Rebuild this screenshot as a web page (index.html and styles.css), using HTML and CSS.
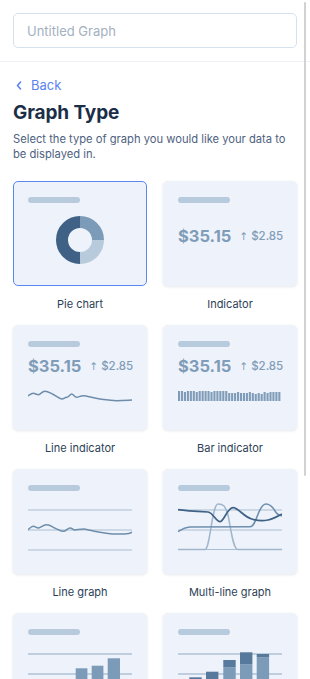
FILE: index.html
```html
<!DOCTYPE html>
<html lang="en">
<head>
<meta charset="utf-8">
<title>Graph Type</title>
<link rel="stylesheet" href="styles.css">
</head>
<body>
<div class="panel">
  <header class="header">
    <input class="title-input" type="text" placeholder="Untitled Graph">
  </header>
  <main class="content">
    <a class="back" href="#">
      <svg class="back-icon" width="6" height="9" viewBox="0 0 6 9"><path d="M4.5 1 L1.5 4.5 L4.5 8" fill="none" stroke="#5a84ef" stroke-width="1.6" stroke-linecap="round" stroke-linejoin="round"/></svg>
      <span>Back</span>
    </a>
    <h1 class="heading">Graph Type</h1>
    <p class="desc">Select the type of graph you would like your data to be displayed in.</p>

    <div class="grid">
      <div class="item">
        <div class="card selected">
          <div class="ph"></div>
          <svg class="chart" viewBox="0 0 104 65" width="104" height="65">
            <path d="M52 11 A18 18 0 0 0 52 47" fill="none" stroke="#3e6185" stroke-width="12"/>
            <path d="M52 11 A18 18 0 0 1 70 29" fill="none" stroke="#7b9bb8" stroke-width="12"/>
            <path d="M70 29 A18 18 0 0 1 52 47" fill="none" stroke="#b8cbdc" stroke-width="12"/>
          </svg>
        </div>
        <div class="label">Pie chart</div>
      </div>

      <div class="item">
        <div class="card">
          <div class="ph"></div>
          <div class="value value-center"><span class="big">$35.15</span><span class="delta"><span class="arrow">↑</span>$2.85</span></div>
        </div>
        <div class="label">Indicator</div>
      </div>

      <div class="item">
        <div class="card">
          <div class="ph"></div>
          <div class="value"><span class="big">$35.15</span><span class="delta"><span class="arrow">↑</span>$2.85</span></div>
          <svg class="mini" viewBox="0 0 104 20" width="104" height="20">
            <path d="M0 9.7 C2 8.5 3.5 7.3 5.3 7.3 S8.5 8.7 10.3 8.7 S14 5.3 17 5.3 S22 7 25.3 8.5 S31 13 33.7 13 S36.5 11.3 38.7 11.3 S42 8 43.7 8 S46.5 11.3 48.7 11.3 S52 9.7 55.3 9.7 S65 12 72 13 S82 14.7 88.7 14.7 S100 14.2 104 14" fill="none" stroke="#6d8dab" stroke-width="1.5" stroke-linecap="round"/>
          </svg>
        </div>
        <div class="label">Line indicator</div>
      </div>

      <div class="item">
        <div class="card">
          <div class="ph"></div>
          <div class="value"><span class="big">$35.15</span><span class="delta"><span class="arrow">↑</span>$2.85</span></div>
          <svg class="mini" viewBox="0 0 104 20" width="104" height="20" fill="#7f9cb8">
            <rect x="0" y="5" width="2.1" height="10"/><rect x="2.95" y="5" width="2.1" height="10"/><rect x="5.9" y="6" width="2.1" height="9"/><rect x="8.85" y="5" width="2.1" height="10"/><rect x="11.8" y="5" width="2.1" height="10"/><rect x="14.75" y="5" width="2.1" height="10"/><rect x="17.7" y="6" width="2.1" height="9"/><rect x="20.65" y="5" width="2.1" height="10"/><rect x="23.6" y="5" width="2.1" height="10"/><rect x="26.55" y="5" width="2.1" height="10"/><rect x="29.5" y="5" width="2.1" height="10"/><rect x="32.45" y="6" width="2.1" height="9"/><rect x="35.4" y="5" width="2.1" height="10"/><rect x="38.35" y="5" width="2.1" height="10"/><rect x="41.3" y="5" width="2.1" height="10"/><rect x="44.25" y="5" width="2.1" height="10"/><rect x="47.2" y="5" width="2.1" height="10"/><rect x="50.15" y="7" width="2.1" height="8"/><rect x="53.1" y="7" width="2.1" height="8"/><rect x="56.05" y="7" width="2.1" height="8"/><rect x="59" y="6" width="2.1" height="9"/><rect x="61.95" y="7" width="2.1" height="8"/><rect x="64.9" y="7" width="2.1" height="8"/><rect x="67.85" y="7" width="2.1" height="8"/><rect x="70.8" y="6" width="2.1" height="9"/><rect x="73.75" y="7" width="2.1" height="8"/><rect x="76.7" y="8" width="2.1" height="7"/><rect x="79.65" y="7" width="2.1" height="8"/><rect x="82.6" y="8" width="2.1" height="7"/><rect x="85.55" y="6" width="2.1" height="9"/><rect x="88.5" y="7" width="2.1" height="8"/><rect x="91.45" y="6" width="2.1" height="9"/><rect x="94.4" y="6" width="2.1" height="9"/><rect x="97.35" y="6" width="2.1" height="9"/><rect x="100.3" y="6" width="2.1" height="9"/>
          </svg>
        </div>
        <div class="label">Bar indicator</div>
      </div>

      <div class="item">
        <div class="card">
          <div class="ph"></div>
          <svg class="chart" viewBox="0 0 104 65" width="104" height="65">
            <g stroke="#a9bdd0" stroke-width="1.2">
              <line x1="0" y1="11" x2="104" y2="11"/>
              <line x1="0" y1="31" x2="104" y2="31"/>
              <line x1="0" y1="51" x2="104" y2="51"/>
            </g>
            <path d="M0 30.7 C2 29 3.5 27.3 5.3 27.3 S8.5 29 10.3 29 S15 25.7 18.7 25.7 S23.5 27.5 27 29.2 S32.5 32.3 35.3 32.3 S39.5 29 42 29 S45 31 47 31 S52 30 55.3 30 S65 32.5 72 33.3 S80 35 85.3 35 S96 34.9 98.7 34.7 S102.5 33.8 104 33.3" fill="none" stroke="#6d8dab" stroke-width="1.5" stroke-linecap="round"/>
          </svg>
        </div>
        <div class="label">Line graph</div>
      </div>

      <div class="item">
        <div class="card">
          <div class="ph"></div>
          <svg class="chart" viewBox="0 0 104 65" width="104" height="65">
            <g stroke="#a9bdd0" stroke-width="1.2">
              <line x1="0" y1="11" x2="104" y2="11"/>
              <line x1="0" y1="31" x2="104" y2="31"/>
              <line x1="0" y1="50.5" x2="104" y2="50.5"/>
            </g>
            <path d="M0 50.5 L27 50.5 C32 50.5 34 5 40 5 C45 5 47 6 50 16 C53 30 55 50.5 60 50.5 L104 50.5" fill="none" stroke="#9fb6cc" stroke-width="1.5"/>
            <path d="M0 32.7 C4 30 7 28.3 12 28 L72 27.7 C76 27.7 78 20 80.5 14 C83 8 85 5 88 5 C92 5 95 8 98 13.5 C100 16 102 16.7 104 16.7" fill="none" stroke="#6f8fae" stroke-width="1.6"/>
            <path d="M0 10.7 C5 11.5 20 12.5 30 13 C35 13.5 38 22.7 42 22.7 C46 22.7 49 9 55 8.7 C60 8.5 66 18 73.7 20 C80 22 85 22 90 21 C96 20 100 17 104 15" fill="none" stroke="#3e6185" stroke-width="1.7"/>
          </svg>
        </div>
        <div class="label">Multi-line graph</div>
      </div>

      <div class="item">
        <div class="card">
          <div class="ph"></div>
          <svg class="chart" viewBox="0 0 104 65" width="104" height="65">
            <g stroke="#8faac3" stroke-width="1.2">
              <line x1="0" y1="11" x2="104" y2="11"/>
              <line x1="0" y1="31" x2="104" y2="31"/>
            </g>
            <g fill="#7b9bb8">
              <rect x="31.5" y="40" width="11.7" height="25"/>
              <rect x="47.7" y="25.3" width="11.7" height="40"/>
              <rect x="63.7" y="22.7" width="11.7" height="43"/>
              <rect x="79.7" y="15.3" width="12.3" height="50"/>
            </g>
          </svg>
        </div>
      </div>

      <div class="item">
        <div class="card">
          <div class="ph"></div>
          <svg class="chart" viewBox="0 0 104 65" width="104" height="65">
            <g stroke="#8faac3" stroke-width="1.2">
              <line x1="0" y1="11" x2="104" y2="11"/>
              <line x1="0" y1="31" x2="104" y2="31"/>
            </g>
            <g fill="#7b9bb8">
              <rect x="11.3" y="40" width="12.4" height="25"/>
              <rect x="28" y="36" width="12.4" height="29"/>
              <rect x="45.3" y="24.3" width="12.4" height="41"/>
              <rect x="62" y="21.3" width="12.4" height="44"/>
              <rect x="78.7" y="14.3" width="12.4" height="51"/>
            </g>
            <g fill="#56799c">
              <rect x="11.3" y="34.3" width="12.4" height="5.7"/>
              <rect x="28" y="28.7" width="12.4" height="7.3"/>
              <rect x="45.3" y="17" width="12.4" height="7.3"/>
              <rect x="62" y="9.3" width="12.4" height="12"/>
              <rect x="78.7" y="11" width="12.4" height="3.3"/>
            </g>
          </svg>
        </div>
      </div>
    </div>
  </main>
  <div class="scroll-thumb"></div>
</div>
</body>
</html>
```

FILE: styles.css
```css
* { box-sizing: border-box; }

html, body {
  margin: 0;
  padding: 0;
  background: #ffffff;
}

body {
  font-family: Inter, "Noto Sans", "Liberation Sans", sans-serif;
  color: #1c2d47;
}

.panel {
  position: relative;
  width: 310px;
  height: 679px;
  overflow: hidden;
}

.header {
  padding: 13px;
  border-bottom: 1px solid #edf1f6;
}

.title-input {
  display: block;
  width: 100%;
  height: 35px;
  border: 1.5px solid #d6e1ee;
  border-radius: 5px;
  padding: 0 13px;
  font-family: inherit;
  font-size: 13px;
  color: #1c2d47;
  background: #fff;
  outline: none;
}

.title-input::placeholder {
  color: #a4b0c1;
}

.content {
  padding: 14px 13px 13px;
}

.back {
  display: flex;
  align-items: center;
  gap: 9px;
  height: 18px;
  padding-left: 3px;
  font-size: 13px;
  color: #5a84ef;
  text-decoration: none;
}

.back-icon { display: block; }

.heading {
  margin: 7px 0 0;
  font-size: 19px;
  line-height: 24px;
  font-weight: 700;
  color: #1c2d47;
  letter-spacing: -0.1px;
}

.desc {
  margin: 6.5px 0 0;
  max-width: 278px;
  font-size: 11.2px;
  line-height: 15px;
  color: #4e6180;
}

.grid {
  margin-top: 19.5px;
  display: grid;
  grid-template-columns: repeat(2, minmax(0, 1fr));
  column-gap: 16px;
  row-gap: 13px;
}

.item {
  min-width: 0;
}

.card {
  height: 105px;
  padding: 15px 14px 0;
  border: 1px solid transparent;
  border-radius: 5px;
  background: #eef2fa;
  box-shadow: 0 1px 3px rgba(40, 60, 90, 0.13);
  overflow: hidden;
}

.card.selected {
  border: 1.5px solid #5b87f0;
  padding: 14.5px 13.5px 0;
  box-shadow: none;
}

.ph {
  width: 52px;
  height: 6px;
  border-radius: 3px;
  background: #b8cbdc;
}

.chart {
  display: block;
  margin-top: 8px;
}

.mini {
  display: block;
  margin-top: 10px;
}

.value {
  display: flex;
  align-items: center;
  gap: 8px;
  height: 20px;
  margin-top: 9px;
  color: #7f9cb8;
  white-space: nowrap;
}

.value-center {
  margin-top: 23px;
}

.big {
  font-size: 16.5px;
  font-weight: 700;
}

.delta {
  display: flex;
  align-items: center;
  gap: 3px;
  font-size: 11.5px;
  font-weight: 500;
}

.arrow {
  font-family: "DejaVu Sans", sans-serif;
  font-size: 10.5px;
  font-weight: 400;
}

.label {
  margin-top: 10px;
  height: 16px;
  line-height: 16px;
  text-align: center;
  font-size: 11px;
  color: #2d3f58;
}

.scroll-thumb {
  position: absolute;
  top: 2px;
  right: 4px;
  width: 2px;
  height: 474px;
  border-radius: 1px;
  background: #d2d2d2;
}
```
